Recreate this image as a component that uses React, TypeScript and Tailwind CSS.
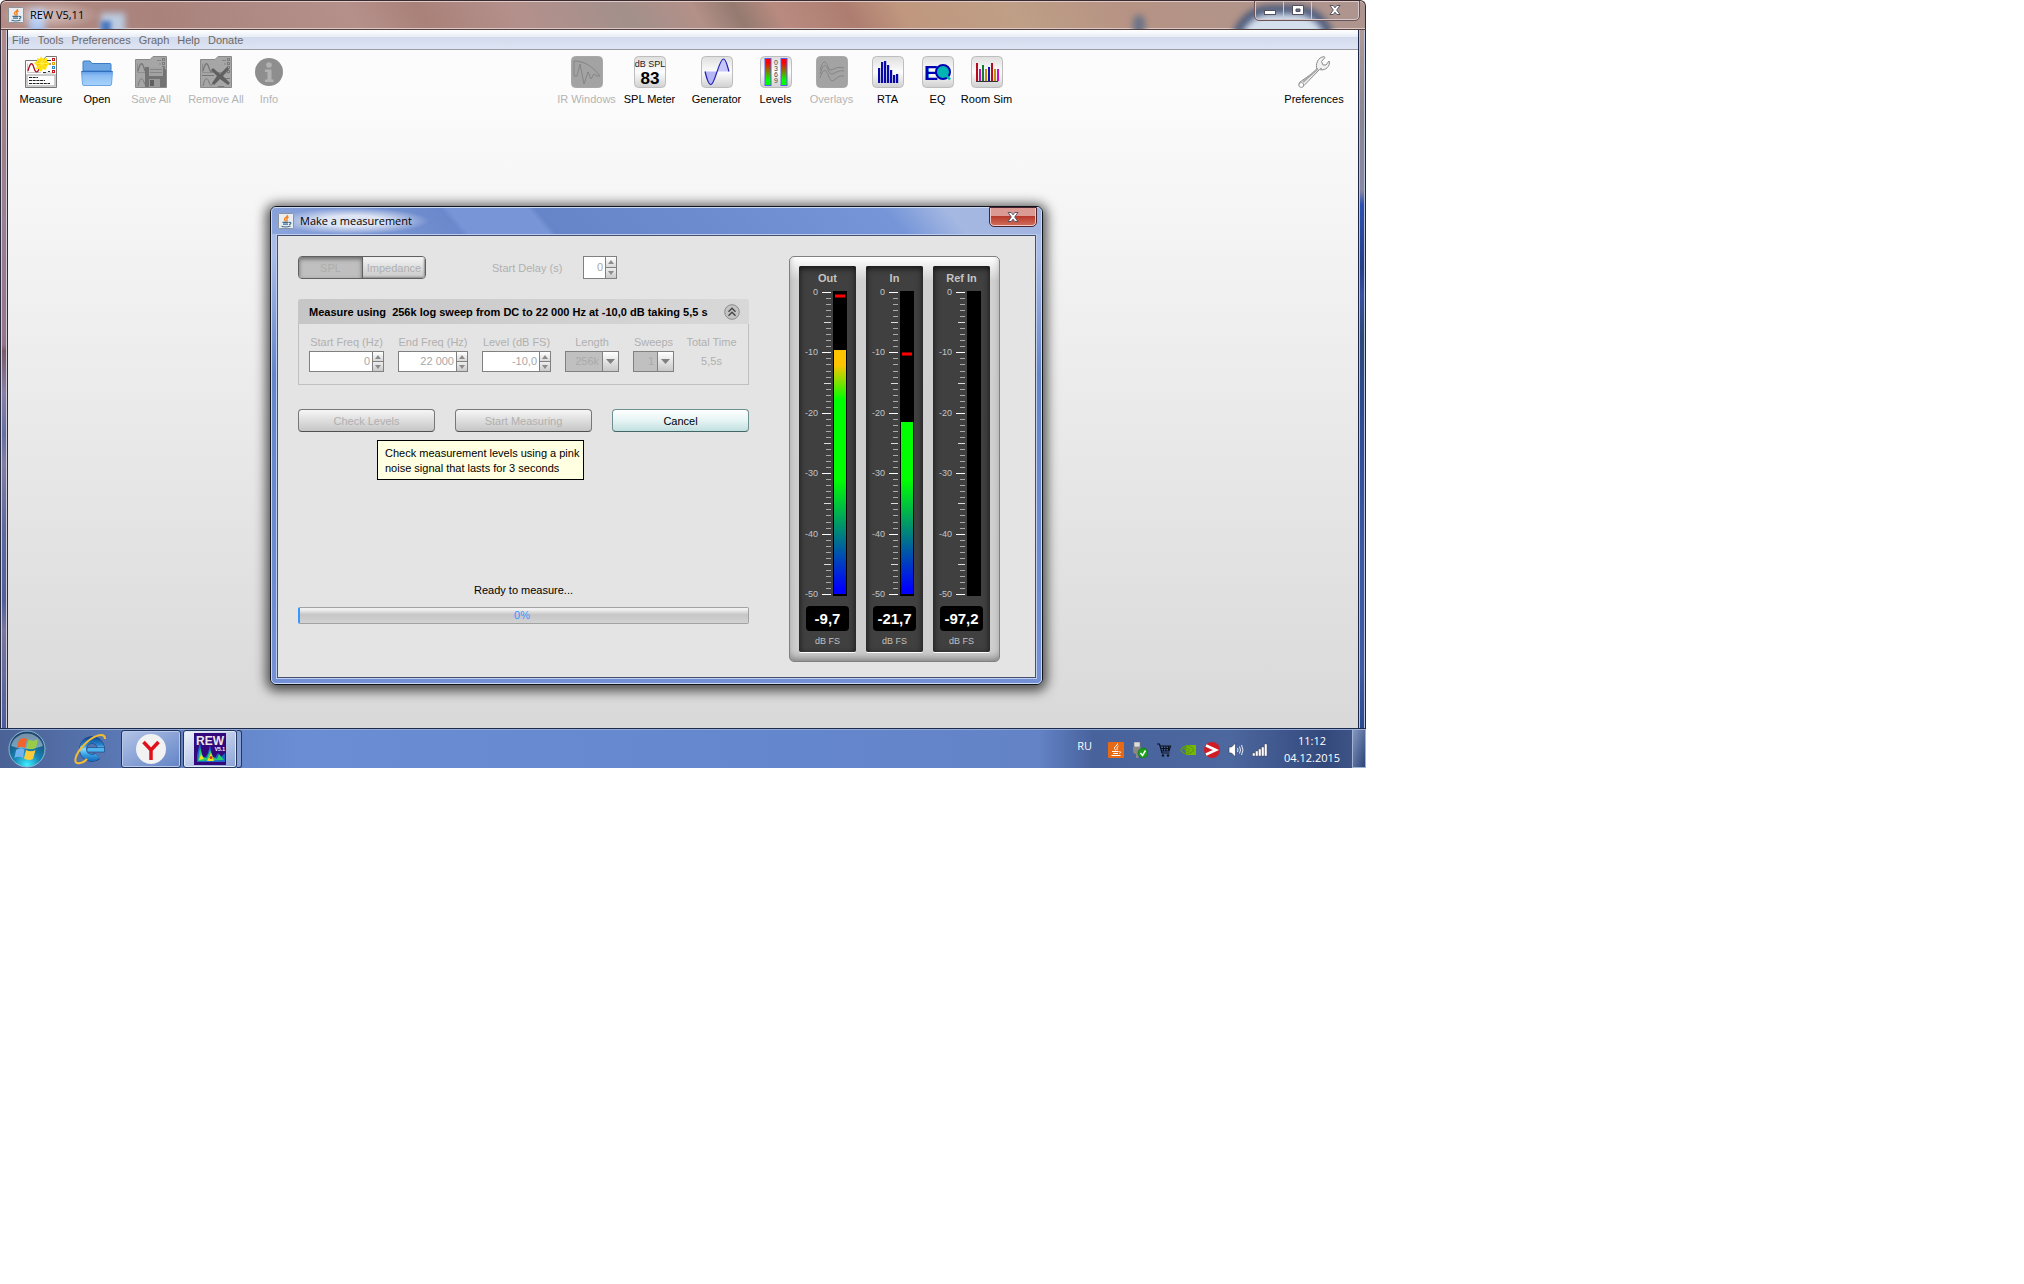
import type { ReactNode } from "react";
import clsx from "clsx";

/* ---------- icons ---------- */

function JavaIcon({ className }: { className?: string }) {
  return (
    <svg viewBox="0 0 16 16" className={clsx("h-4 w-4 shrink-0", className)}>
      <rect x="0.5" y="0.5" width="15" height="15" rx="1" fill="#e9edf1" stroke="#8c949c" />
      <path d="M9.5 2C10 4 6 4.500 6.500 6.500C6.700 7.300 7.500 7.800 7.300 8.500M10.500 4C8.500 5 8.500 5.500 9 6.500C9.400 7.300 8.700 8 8.500 8.500" fill="none" stroke="#ee8022" strokeWidth="1.400" />
      <path d="M4.500 9.300H10.500M5 11.200H10M3.500 13.300C6 14.200 9.500 14.200 12.500 13M11 9.500C13.500 9 13.500 11 11 11.500" fill="none" stroke="#3d6c8c" strokeWidth="1.200" />
    </svg>
  );
}

function Tile({ children, disabled }: { children: ReactNode; disabled?: boolean }) {
  return (
    <svg viewBox="0 0 32 32" className="h-8 w-8">
      <defs>
        <linearGradient id="tile" x1="0" y1="0" x2="0" y2="1">
          <stop offset="0" stopColor="#dedede" />
          <stop offset="0.5" stopColor="#fdfdfd" />
          <stop offset="1" stopColor="#d0d0d0" />
        </linearGradient>
      </defs>
      <rect x="0.500" y="0.500" width="31" height="31" rx="4" fill={disabled ? "#a3a3a3" : "url(#tile)"} stroke={disabled ? "#a8a8a8" : "#bdbdbd"} />
      {children}
    </svg>
  );
}

function Sheet({ disabled }: { disabled?: boolean }) {
  const line = disabled ? "#8a8a8a" : "#777";
  const fill = disabled ? "#a6a6a6" : "#fff";
  const wave = disabled ? "#777" : "#b00c1c";
  return (
    <g>
      {disabled ? (
        <path d="M0.500 3.500H15L18 0.500H31.500V31.500H0.500Z" fill={fill} stroke={line} />
      ) : (
        <path d="M0.500 4.500H18L21 0.500H31.500V31.500H0.500Z" fill={fill} stroke={line} />
      )}
      <path d="M2.500 7.500V16.500H16M18 17H29" fill="none" stroke={disabled ? "#8e8e8e" : "#c5c5c5"} />
      <path d="M3 15C5 7 7 5 9 12C10 16 12 18 14 13" fill="none" stroke={wave} strokeWidth="1.300" />
      <path d="M22 4.500H26M18 16.500H21M23 15.500H25M24 8H26" stroke={disabled ? "#858585" : "#333"} />
      {["#c81818", "#e0a010", "#2888d0", "#c81818"].map((c, i) => (
        <rect key={c + i} x="27.500" y={2.500 + i * 4} width="2" height="2" fill="none" stroke={disabled ? "#7d7d7d" : c} />
      ))}
    </g>
  );
}

function MeasureIcon() {
  return (
    <svg viewBox="0 0 32 32" className="h-8 w-8">
      <Sheet />
      <rect x="2" y="19" width="28" height="11" fill="#fff" stroke="#bbb" strokeWidth="1.500" />
      <path d="M4 21.500H13M4 24.500H20M4 27.500H25" stroke="#222" strokeDasharray="3 0.700" />
      <path d="M16 0L18 3L22 2L22 5L25 8L22 10L21 14L18 13L16 16L14 13L11 13L12 10L9 7L12 5L12 2L15 3Z" fill="#ffe400" />
      <circle cx="17" cy="7.500" r="5" fill="#ffd200" />
      <path d="M17 2V13M11.500 7.500H22.500M13 3.500L21 11.500M21 3.500L13 11.500" stroke="#fff04a" />
    </svg>
  );
}

function FolderIcon() {
  return (
    <svg viewBox="0 0 32 32" className="h-8 w-8">
      <defs>
        <linearGradient id="folder" x1="0" y1="0" x2="0" y2="1">
          <stop offset="0" stopColor="#5f9fea" />
          <stop offset="0.300" stopColor="#8dbdf3" />
          <stop offset="1" stopColor="#a7d3fb" />
        </linearGradient>
      </defs>
      <path d="M2 15V6Q2 5 3 5H9L11 7.500H29Q30 7.500 30 8.500V15Z" fill="#6ea6e4" stroke="#3d7cc6" />
      <path d="M0.500 15.500H31.500L30.500 28Q30.400 29.500 29 29.500H3Q1.600 29.500 1.500 28Z" fill="url(#folder)" stroke="#6ba4e6" />
      <path d="M0.500 15.500H31.500" stroke="#2f6fbd" />
    </svg>
  );
}

function SaveAllIcon() {
  return (
    <svg viewBox="0 0 32 32" className="h-8 w-8">
      <Sheet disabled />
      <path d="M3 30C5 21 7 21 9 26C10 30 12 30 13 27" fill="none" stroke="#777" />
      <path d="M10 11H28L31 14V31H10Z" fill="#737373" />
      <rect x="14" y="11" width="14" height="9" fill="#a2a2a2" />
      <path d="M15 13.500H27M15 16.500H27" stroke="#858585" />
      <rect x="14" y="23" width="11" height="8" fill="#999" />
      <rect x="15" y="24" width="4" height="6" fill="#5f5f5f" />
    </svg>
  );
}

function RemoveAllIcon() {
  return (
    <svg viewBox="0 0 32 32" className="h-8 w-8">
      <Sheet disabled />
      <path d="M3 30C5 21 7 21 9 26C10 30 12 30 13 27M2 19.500H14M25 22.500H30M18 30.500H24" fill="none" stroke="#777" />
      <path d="M13 12L20 18L27 11L29 13L23 20L30 27L28 29L20 23L14 29L12 27L17 20L11 14Z" fill="#606060" />
    </svg>
  );
}

function InfoIcon() {
  return (
    <svg viewBox="0 0 32 32" className="h-8 w-8">
      <circle cx="16" cy="16" r="14" fill="#8e8e8e" />
      <circle cx="16" cy="9" r="2.800" fill="#b2b2b2" />
      <path d="M12 13.500H18.500V23.500H20.500V26H12V23.500H14.500V16H12Z" fill="#b2b2b2" />
    </svg>
  );
}

function WrenchIcon() {
  return (
    <svg viewBox="0 0 32 32" className="h-8 w-8">
      <path
        d="M19 14C17 8 20 1 26 0.700L27 1.500L23.500 5.500L25 9L28 9L31 5L31.500 7C31 12 26 15 21.500 13.500L6 29.500C3 33 -1 29 2 26Z"
        fill="#f0f0f0"
        stroke="#8a8a8a"
      />
      <path d="M5 26L20 12.500M22 13L24 13" stroke="#a9a9a9" strokeWidth="2" />
      <circle cx="3.300" cy="29" r="2.400" fill="#fff" stroke="#999" />
    </svg>
  );
}

const rtaBars = [15, 21, 22, 18, 13, 8, 9];
const roomBars = [
  { h: 18, c: "#b80c1c" },
  { h: 12, c: "#c010c0" },
  { h: 16, c: "#108030" },
  { h: 12, c: "#c09010" },
  { h: 14, c: "#1010c0" },
  { h: 18, c: "#b80c1c" },
  { h: 12, c: "#c09010" },
  { h: 12, c: "#c010c0" },
];

/* ---------- toolbar ---------- */

function Tool({ label, className, disabled, children }: { label: string; className: string; disabled?: boolean; children: ReactNode }) {
  return (
    <button
      type="button"
      disabled={disabled}
      className={clsx("flex flex-col items-center gap-1 whitespace-nowrap leading-[14px]", disabled ? "text-[#b4b4b4]" : "text-black", className)}
    >
      {children}
      {label}
    </button>
  );
}

function Toolbar() {
  return (
    <div className="flex items-start justify-between pt-1.5 pr-2.5 pl-[3px]">
      <div className="flex">
        <Tool label="Measure" className="w-[60px]"><MeasureIcon /></Tool>
        <Tool label="Open" className="w-[52px]"><FolderIcon /></Tool>
        <Tool label="Save All" className="w-[56px]" disabled><SaveAllIcon /></Tool>
        <Tool label="Remove All" className="w-[74px]" disabled><RemoveAllIcon /></Tool>
        <Tool label="Info" className="w-[32px]" disabled><InfoIcon /></Tool>
      </div>
      <div className="flex pr-0.5">
        <Tool label="IR Windows" className="w-[64px]" disabled>
          <Tile disabled>
            <path d="M3 20V5C14 5 22 11 29 20M3 20H6L9 8L13 28L17 16L20 23L23 18L26 20H29" fill="none" stroke="#858585" />
          </Tile>
        </Tool>
        <Tool label="SPL Meter" className="w-[62px]">
          <Tile>
            <text x="16" y="11" textAnchor="middle" fontSize="9" fill="#222">dB SPL</text>
            <text x="16" y="28" textAnchor="middle" fontSize="17" fontWeight="bold" fill="#000">83</text>
          </Tile>
        </Tool>
        <Tool label="Generator" className="w-[72px]">
          <Tile>
            <path d="M4 15.500C6 24 8 29 10 28.500C13 28 15 20 16.500 15.500Z" fill="#b6b6f6" />
            <path d="M16.500 15.500C18 10 20 3 22.500 3C25 3 26 9 28 15.500Z" fill="#c6c6fa" />
            <path d="M4 15.500C6 24 8 29 10 28.500C14 28 18 3 22.500 3C25 3 26 9 28 15.500" fill="none" stroke="#2020b0" strokeWidth="1.200" />
          </Tile>
        </Tool>
        <Tool label="Levels" className="w-[46px]">
          <Tile>
            <defs>
              <linearGradient id="lvl" x1="0" y1="0" x2="0" y2="1">
                <stop offset="0.150" stopColor="#f00" />
                <stop offset="0.800" stopColor="#0f0" />
              </linearGradient>
            </defs>
            <rect x="5" y="2.500" width="6" height="27" fill="url(#lvl)" stroke="#5a5ae8" />
            <rect x="21" y="2.500" width="6" height="27" fill="url(#lvl)" stroke="#5a5ae8" />
            {["0", "3", "6", "9"].map((n, i) => (
              <text key={n} x="16" y={9 + i * 6} textAnchor="middle" fontSize="7" fill="#444">{n}</text>
            ))}
          </Tile>
        </Tool>
        <Tool label="Overlays" className="w-[66px]" disabled>
          <Tile disabled>
            <path d="M4 14C8 1 10 6 13 13C15 17 19 9 28 12M4 18C8 5 10 9 13 16C16 22 20 13 28 15M4 22C8 10 10 14 13 21C17 31 20 18 28 20" fill="none" stroke="#858585" />
          </Tile>
        </Tool>
        <Tool label="RTA" className="w-[46px]">
          <Tile>
            {rtaBars.map((h, i) => (
              <rect key={i} x={6 + i * 3} y={27 - h} width="2.200" height={h} fill="#0808a8" />
            ))}
          </Tile>
        </Tool>
        <Tool label="EQ" className="w-[54px]">
          <Tile>
            <text x="2" y="23.500" fontSize="21" fontWeight="bold" fill="#0000b0">E</text>
            <circle cx="21" cy="16" r="7" fill="#00b4b4" stroke="#0000b0" strokeWidth="2" />
            <path d="M24 19L28 23.500" stroke="#00b4b4" strokeWidth="2.500" />
          </Tile>
        </Tool>
        <Tool label="Room Sim" className="w-[44px]">
          <Tile>
            {roomBars.map((b, i) => (
              <rect key={i} x={5 + i * 3} y={25 - b.h} width="2" height={b.h} fill={b.c} />
            ))}
            <path d="M5 25.500H27" stroke="#333" />
          </Tile>
        </Tool>
      </div>
      <Tool label="Preferences" className="w-[68px]"><WrenchIcon /></Tool>
    </div>
  );
}

/* ---------- dialog form ---------- */

function Spinner({ id, value, className }: { id: string; value: string; className: string }) {
  return (
    <div className={clsx("flex border border-[#808080] bg-white", className)}>
      <input id={id} disabled value={value} readOnly className="w-0 min-w-0 flex-1 bg-white pr-0.5 text-right text-[#a8a8a8]" />
      <div className="flex w-[11px] flex-col border-l border-[#808080]">
        <button type="button" disabled aria-label="Increase" className="flex flex-1 items-center justify-center border-b border-[#808080] bg-linear-to-b from-white to-[#d8d8d8]">
          <svg viewBox="0 0 6 4" className="h-1 w-1.5"><path d="M0 4L3 0L6 4Z" fill="#8c8c8c" /></svg>
        </button>
        <button type="button" disabled aria-label="Decrease" className="flex flex-1 items-center justify-center bg-linear-to-b from-[#eee] to-[#cacaca]">
          <svg viewBox="0 0 6 4" className="h-1 w-1.5"><path d="M0 0L3 4L6 0Z" fill="#8c8c8c" /></svg>
        </button>
      </div>
    </div>
  );
}

function Combo({ id, value }: { id: string; value: string }) {
  return (
    <div className="flex h-[21px] border border-[#808080]">
      <select id={id} disabled className="w-0 min-w-0 flex-1 appearance-none bg-[#c0c0c0] pr-[3px] text-right text-[#aaa] opacity-100 [text-align-last:right]">
        <option>{value}</option>
      </select>
      <span className="flex w-4 items-center justify-center border-l border-[#808080] bg-linear-to-b from-white to-[#c8c8c8]">
        <svg viewBox="0 0 9 5" className="h-[5px] w-[9px]"><path d="M0 0H9L4.500 5Z" fill="#808080" /></svg>
      </span>
    </div>
  );
}

function Field({ id, label, className, children }: { id: string; label: string; className: string; children: ReactNode }) {
  return (
    <div className={clsx("flex flex-col gap-0.5", className)}>
      <label htmlFor={id} className="self-center whitespace-nowrap leading-[14px]">{label}</label>
      {children}
    </div>
  );
}

const greyButton =
  "h-[23px] w-full rounded-[4px] border border-[#777] border-b-[#505050] bg-linear-to-b from-[#f6f6f6] via-[#dedede] to-[#c6c6c6] pt-px text-[#b0b0b0]";

function MeasureForm() {
  return (
    <form className="flex w-[451px] flex-col">
      <div className="flex items-center text-[#b0b0b0]">
        <div className="flex h-[23px] w-32 overflow-hidden rounded-[4px] border border-[#606060]">
          <button type="button" disabled className="w-16 border-r border-[#606060] bg-[#bfbfbf] pt-px text-[#adadad] shadow-[inset_0_2px_4px_#666]">SPL</button>
          <button type="button" disabled className="flex-1 bg-linear-to-b from-[#f4f4f4] to-[#c9c9c9] pt-px shadow-[inset_-1px_-1px_2px_#888]">Impedance</button>
        </div>
        <label htmlFor="delay" className="ml-[66px] pt-px whitespace-nowrap">Start Delay (s)</label>
        <Spinner id="delay" value="0" className="ml-auto h-[23px] w-[34px]" />
        <span className="w-[132px]" />
      </div>

      <section className="mt-5">
        <header className="flex h-[25px] items-center justify-between rounded-t-[3px] bg-linear-to-r from-[#c6c6c6] to-[#d8d8d8] pr-[9px] pl-[11px]">
          <h2 className="pt-px text-[11px] font-bold whitespace-pre text-black">
            {"Measure using  256k log sweep from DC to 22 000 Hz at -10,0 dB taking 5,5 s"}
          </h2>
          <button type="button" aria-label="Collapse" className="shrink-0">
            <svg viewBox="0 0 16 16" className="h-4 w-4">
              <circle cx="8" cy="8" r="7.300" fill="#c4c4c4" stroke="#8a8a8a" />
              <path d="M4.500 7.700L8 4.200L11.500 7.700M4.500 11.700L8 8.200L11.500 11.700" fill="none" stroke="#444" strokeWidth="1.400" />
            </svg>
          </button>
        </header>
        <div className="flex gap-3.5 border border-t-0 border-[#c0c0c0] pt-[11px] pb-3 pl-2.5 text-[#b0b0b0]">
          <Field id="start" label="Start Freq (Hz)" className="w-[75px]">
            <Spinner id="start" value="0" className="h-[21px]" />
          </Field>
          <Field id="end" label="End Freq (Hz)" className="w-[70px]">
            <Spinner id="end" value="22 000" className="h-[21px]" />
          </Field>
          <Field id="level" label="Level (dB FS)" className="w-[69px]">
            <Spinner id="level" value="-10,0" className="h-[21px]" />
          </Field>
          <Field id="length" label="Length" className="w-[54px]">
            <Combo id="length" value="256k" />
          </Field>
          <Field id="sweeps" label="Sweeps" className="w-[41px]">
            <Combo id="sweeps" value="1" />
          </Field>
          <Field id="total" label="Total Time" className="w-[47px]">
            <output id="total" className="text-center leading-[21px]">5,5s</output>
          </Field>
        </div>
      </section>

      <div className="mt-6 grid grid-cols-3 gap-5">
        <div className="relative">
          <button type="button" disabled className={greyButton}>Check Levels</button>
          <div role="tooltip" className="absolute top-[31px] left-[79px] z-10 border border-black bg-[#ffffe1] pt-[5px] pr-1 pb-[3px] pl-[7px] leading-[15px] whitespace-nowrap text-black">
            Check measurement levels using a pink
            <br />
            noise signal that lasts for 3 seconds
          </div>
        </div>
        <button type="button" disabled className={greyButton}>Start Measuring</button>
        <button type="button" className="h-[23px] rounded-[4px] border border-[#6f9090] border-b-[#466] bg-linear-to-b from-white via-[#e6f4f4] to-[#c2dfe0] pt-px text-black">
          Cancel
        </button>
      </div>

      <p className="mt-auto text-center leading-[14px] text-black">Ready to measure...</p>
      <div
        role="progressbar"
        aria-valuenow={0}
        className="mt-2.5 mb-[38px] flex h-[17px] items-center justify-center rounded-[2px] border border-l-2 border-[#a2a2a2] border-l-[#3399ff] bg-linear-to-b from-[#f0f0f0] from-10% via-[#c6c6c6] via-45% to-[#d2d2d2] pr-1 text-[#3399ff]"
      >
        0%
      </div>
    </form>
  );
}

/* ---------- level meters ---------- */

const meters = [
  { name: "Out", value: "-9,7", level: 9.7, peak: 0.8 },
  { name: "In", value: "-21,7", level: 21.7, peak: 10.4 },
  { name: "Ref In", value: "-97,2", level: 97.2, peak: null },
];

const dbToY = (db: number) => Math.round(6 + db * 6.04);

function Meter({ name, value, level, peak }: (typeof meters)[number]) {
  return (
    <div className="flex w-[57px] flex-col items-center rounded-[2px] bg-[#404040] pt-1 pb-[5px] shadow-[inset_0_2px_6px_#111,0_1px_0_#fff]">
      <h3 className="leading-4 font-bold text-[#c4c4c4]">{name}</h3>
      <svg viewBox="0 0 57 314" className="h-[314px] w-[57px]">
        <defs>
          <linearGradient id="meter" gradientUnits="userSpaceOnUse" x1="0" y1="79" x2="0" y2="308">
            <stop offset="0" stopColor="#ffc400" />
            <stop offset="0.150" stopColor="#00ff00" />
            <stop offset="0.500" stopColor="#00ff00" />
            <stop offset="0.980" stopColor="#0000ff" />
          </linearGradient>
        </defs>
        {Array.from({ length: 51 }, (_, db) => {
          const major = db % 10 === 0;
          const x = major ? 23 : db % 5 === 0 ? 25 : 27;
          return <rect key={db} x={x} y={dbToY(db)} width={32 - x} height="1" fill={major ? "#fff" : db % 5 === 0 ? "#ddd" : "#aaa"} />;
        })}
        {[0, 10, 20, 30, 40, 50].map((db) => (
          <text key={db} x="19" y={dbToY(db) + 3} textAnchor="end" fontSize="9" fill="#c4c4c4">
            {db === 0 ? "0" : `-${db}`}
          </text>
        ))}
        <rect x="34" y="5" width="14" height="305" fill="#000" />
        {level < 50 && <rect x="35" y={dbToY(level) - 1} width="12" height={309 - dbToY(level)} fill="url(#meter)" />}
        {peak !== null && (
          <g>
            <rect x="36" y={dbToY(peak) - 3} width="10" height="4" fill="#800" />
            <rect x="36" y={dbToY(peak) - 2} width="10" height="2" fill="#f00" />
          </g>
        )}
      </svg>
      <output className="mt-1.5 h-[25px] w-[43px] rounded-[4px] bg-black text-center text-[15px] leading-[25px] font-bold text-white">{value}</output>
      <span className="mt-1 text-[9px] leading-3 text-[#c0c0c0]">dB FS</span>
    </div>
  );
}

function Dialog() {
  return (
    <div className="w-fit rounded-[6px] border border-[#101418] bg-linear-to-b from-[#a9bce6] from-10% via-[#6485c8] via-35% to-[#7391d4] shadow-[0_2px_12px_4px_rgba(0,0,0,0.65)]">
      <div className="rounded-[5px] border border-[#c9d8f4] px-1 pb-1">
        <div className="-mx-1 flex h-[26px] justify-between rounded-t-[4px] bg-[linear-gradient(50deg,#8ba4dc_0%,#6a88cb_24%,#7896d7_25%,#7896d7_35%,#6685c8_36%,#6d8dd0_60%,#7595d8_80%,#a5b8e2_88%,#a0b4e0_100%)] pr-[5px] pl-1.5">
          <div className="flex items-center gap-1.5 bg-[radial-gradient(ellipse,rgba(255,255,255,0.75)_30%,transparent_72%)] pr-4">
            <JavaIcon />
            <h1 className="font-['Open_Sans'] text-[11px] text-black">Make a measurement</h1>
          </div>
          <button
            type="button"
            aria-label="Close dialog"
            className="flex h-[18px] w-[46px] items-center justify-center rounded-b-[4px] border border-t-0 border-[#f0c8c8] bg-linear-to-b from-[#dc9a94] from-45% via-[#b83a2c] via-50% to-[#cf6a58] outline outline-[#4a2430]"
          >
            <CloseGlyph />
          </button>
        </div>
        <div className="border border-[#bccdf0]">
          <div className="flex gap-10 border border-[#44506e] bg-[#e4e4e4] pt-5 pr-[35px] pb-[15px] pl-5">
            <MeasureForm />
            <div className="flex gap-2.5 rounded-[5px] border border-[#808080] bg-linear-to-b from-white via-[#d0d0d0] via-6% to-[#cecece] p-[9px] shadow-[inset_0_-5px_8px_-3px_#777]">
              {meters.map((m) => (
                <Meter key={m.name} {...m} />
              ))}
            </div>
          </div>
        </div>
      </div>
    </div>
  );
}

/* ---------- window frame ---------- */

function CloseGlyph() {
  return (
    <svg viewBox="0 0 12 10" className="h-2.5 w-3">
      <path d="M1 0.500H4.200L6 2.800L7.800 0.500H11L7.700 5L11 9.500H7.800L6 7.200L4.200 9.500H1L4.300 5Z" fill="#fff" stroke="#4a4a5c" strokeWidth="0.900" />
    </svg>
  );
}

function TitleBar() {
  return (
    <div className="relative flex h-[30px] justify-between overflow-hidden rounded-t-[6px] border border-b-[#54403e] border-[#3c2a2e] bg-[linear-gradient(60deg,#b38d86_0%,#a9827c_12%,#b5908a_26%,#a98179_31%,#b4908c_38%,#a3908b_46%,#b39088_51%,#947a70_54%,#b98b80_57%,#ad7d70_62%,#c0977f_66%,#bf9f86_74%,#b69384_82%,#ad958f_100%)] shadow-[inset_0_1px_0_#dccbc8,inset_0_-1px_0_#dccbc8]">
      <span className="absolute top-2 left-7 h-7 w-4 bg-[#a9c2ee] blur-[3px]" />
      <span className="absolute top-3 left-[100px] h-6 w-6 bg-[#bccbe0] blur-[3px]" />
      <span className="absolute top-5 left-[100px] h-3 w-2.5 bg-[#4a78c0] blur-[2px]" />
      <span className="absolute top-3.5 left-[1132px] h-5 w-3 rounded-full bg-[#6b7388] blur-[3px]" />
      <span className="absolute top-1 left-[1230px] h-20 w-[104px] rounded-full border-[9px] border-[#4e5c7c] bg-[#d5e0ee] blur-[3px]" />
      <div className="relative flex items-center gap-1.5 bg-[radial-gradient(ellipse,rgba(255,255,255,0.35)_20%,transparent_72%)] pr-4 pl-[7px]">
        <JavaIcon />
        <span className="font-['Open_Sans'] text-[11px] text-black">REW V5,11</span>
      </div>
      <div className="relative mr-1.5 flex h-[19px] rounded-b-[4px] border border-t-0 border-[#d6c8ca] outline outline-[#6b5558]">
        <button type="button" aria-label="Minimize" className="flex w-7 items-center justify-center border-r border-[#d6c8ca]">
          <svg viewBox="0 0 12 10" className="h-2.5 w-3"><rect x="0.500" y="5.500" width="11" height="4" fill="#fff" stroke="#55505e" /></svg>
        </button>
        <button type="button" aria-label="Maximize" className="flex w-7 items-center justify-center border-r border-[#d6c8ca]">
          <svg viewBox="0 0 12 10" className="h-2.5 w-3"><path d="M0.500 0.500H11.500V9.500H0.500ZM4 4V6.500H8V4Z" fill="#fff" fillRule="evenodd" stroke="#55505e" /></svg>
        </button>
        <button type="button" aria-label="Close" className="flex w-[46px] items-center justify-center">
          <CloseGlyph />
        </button>
      </div>
    </div>
  );
}

const menus = ["File", "Tools", "Preferences", "Graph", "Help", "Donate"];

function MainWindow() {
  return (
    <div>
      <TitleBar />
      <div className="flex">
        <div className="w-2 shrink-0 border-x border-[#2c2c40] bg-[linear-gradient(#b08a88,#a08088_15%,#997f90_28%,#967588_45%,#7a5c64_46%,#8a80a8_52%,#6470a4_58%,#8080a4_62%,#5c68a0_72%,#50609c_82%,#7878a0_86%,#4c5c9c)] shadow-[inset_-1px_0_0_#d0cbd8,inset_1px_0_0_#d0cbd8]" />
        <div className="min-w-0 flex-1 bg-linear-to-b from-[#fcfcfc] from-8% to-[#d9d9d9]">
          <nav className="flex h-5 items-center gap-2 border-b border-[#9c9ca4] bg-[linear-gradient(#ffffff,#e8eef6_35%,#d3daec_36%,#dde4f4)] pt-0.5 pl-1 text-[#6b6b6b]">
            {menus.map((m) => (
              <a key={m} href="#">{m}</a>
            ))}
          </nav>
          <Toolbar />
          <main className="pt-[100px] pb-[43px] pl-[262px]">
            <Dialog />
          </main>
        </div>
        <div className="w-2 shrink-0 border-x border-[#1e2648] bg-[linear-gradient(#b09a98,#8a8690_12%,#8888a4_23%,#2c50b0_25%,#243f88_34%,#3850a0_38%,#2c4878_44%,#2c4c94_56%,#3c58a4_75%,#3e5aa4_92%,#284a90)] shadow-[inset_-1px_0_0_#b8c4dc,inset_1px_0_0_#b8c4dc]" />
      </div>
    </div>
  );
}

/* ---------- taskbar ---------- */

function StartOrb() {
  return (
    <svg viewBox="0 0 38 38" className="h-[38px] w-[38px]">
      <defs>
        <radialGradient id="orb" cx="0.500" cy="0.950" r="0.850">
          <stop offset="0" stopColor="#3ff0ff" />
          <stop offset="0.450" stopColor="#1683b4" />
          <stop offset="1" stopColor="#1c4870" />
        </radialGradient>
      </defs>
      <circle cx="19" cy="19" r="18" fill="url(#orb)" stroke="#8fb8d0" />
      <path d="M3 16A16.500 16.500 0 0 1 35 16Q19 22 3 16Z" fill="#fff" opacity="0.400" />
      <path d="M11 10Q15 6.500 19 9L17 18Q12 15.500 8.500 18.500Z" fill="#f0642c" />
      <path d="M20.500 9.500Q25 12 30 9L28 18Q23 20.500 18.500 18Z" fill="#9acb46" />
      <path d="M8 20Q12 17 16.500 19.500L15 28Q10.500 25.500 6.500 28Z" fill="#6fb4ee" />
      <path d="M18 20Q23 22.500 27.500 20L25 29Q20 31 16 28.500Z" fill="#fccb3a" />
    </svg>
  );
}

function ExplorerIcon() {
  return (
    <svg viewBox="0 0 32 32" className="h-8 w-8">
      <defs>
        <linearGradient id="ie" gradientUnits="userSpaceOnUse" x1="0" y1="3" x2="0" y2="29">
          <stop offset="0" stopColor="#0c3f8c" />
          <stop offset="0.350" stopColor="#2a86d0" />
          <stop offset="0.500" stopColor="#8cd8fa" />
          <stop offset="0.700" stopColor="#3aa4e6" />
          <stop offset="1" stopColor="#0f5fb4" />
        </linearGradient>
      </defs>
      <circle cx="18" cy="16" r="9" fill="none" stroke="#123f80" strokeWidth="7.500" strokeDasharray="49 8" strokeDashoffset="-8" />
      <circle cx="18" cy="16" r="9" fill="none" stroke="url(#ie)" strokeWidth="6.500" strokeDasharray="49 8" strokeDashoffset="-8" />
      <path d="M13 14.500H30.500V19H13Z" fill="#4fb4ee" stroke="#123f80" strokeWidth="0.600" />
      <path d="M31 6C31 -2 18 3 10 12C1 21 -2 32 6 30C8 30 11 28 13 26" fill="none" stroke="#f3bd33" strokeWidth="2" />
    </svg>
  );
}

function RewIcon() {
  return (
    <svg viewBox="0 0 32 32" className="h-8 w-8">
      <rect width="32" height="32" fill="#33087c" />
      <path d="M3 29V22L6 9L8 22L11 25L14 20L16 12L18 22L21 25L24 20L27 24L31 20V29Z" fill="#1c64c8" />
      <path d="M4 28L6 15L9 24L13 25L16 17L19 24L23 26L25 21L30 27Z" fill="#22d070" />
      <path d="M5 27L7 21L10 26ZM13 28L17 20L20 28Z" fill="#f0e020" />
      <circle cx="17" cy="24.500" r="1.500" fill="#e83018" />
      <text x="16" y="11.500" textAnchor="middle" fontSize="12" fontWeight="bold" fill="#e8e8e8">REW</text>
      <text x="31" y="18" textAnchor="end" fontSize="5" fontWeight="bold" fill="#fff">V5.1</text>
    </svg>
  );
}

function TrayIcons() {
  return (
    <div className="flex items-center gap-2 pt-0.5">
      <svg viewBox="0 0 16 16" className="h-4 w-4">
        <rect width="16" height="16" rx="1" fill="#e66a16" />
        <path d="M9.500 1.500C10 4 6 4 6.500 6.500C7 7.500 7.500 7.500 7.500 8.500M10.500 4C8.500 5 9.500 6.500 9 8M4 9.500H10.500M5 11.500H10M3.500 13.500H12.500M11.500 9.500C13 9.500 13 11 11 11.500" fill="none" stroke="#fff" />
      </svg>
      <svg viewBox="0 0 16 16" className="h-4 w-4">
        <path d="M2 0H8V5H2Z" fill="#ddd" stroke="#777" strokeWidth="0.600" />
        <path d="M1 5H9V9Q9 12 6.500 12V16H4V12Q1 12 1 9Z" fill="#888" />
        <circle cx="11" cy="11" r="5" fill="#1ea01e" stroke="#0d700d" strokeWidth="0.600" />
        <path d="M8.500 11L10.500 13.500L13.500 8.500" fill="none" stroke="#fff" strokeWidth="1.500" />
      </svg>
      <svg viewBox="0 0 16 16" className="h-4 w-4">
        <path d="M1 2H3.500L6 11H13.500M4 4H14.500L13 9H5.500M7.500 4V9M10 4V9M12.500 4V9M5 6.500H13.500" fill="none" stroke="#0c1220" strokeWidth="1.200" />
        <circle cx="7" cy="13.500" r="1.200" fill="#0c1220" />
        <circle cx="12" cy="13.500" r="1.200" fill="#0c1220" />
      </svg>
      <svg viewBox="0 0 16 16" className="h-4 w-4">
        <path d="M6 3H16V13H6Z" fill="#76b900" />
        <path d="M0.500 8Q4 3 9.500 4Q12 5 14 8Q9.500 13 4.500 11.500Q2 10 0.500 8ZM3.500 8Q6.500 4.500 9.500 7.500Q8 10.500 6 9.500Q5 8.500 6.500 7.500" fill="none" stroke="#5f9e10" strokeWidth="1.200" />
      </svg>
      <svg viewBox="0 0 16 16" className="h-4 w-4">
        <circle cx="8" cy="8" r="8" fill="#d01c24" />
        <path d="M2 3.500L12 8L2 12.500" fill="none" stroke="#fff" strokeWidth="2.500" />
      </svg>
      <svg viewBox="0 0 16 16" className="h-4 w-4">
        <path d="M1 5H3.500L7.500 1V15L3.500 11H1Z" fill="#fff" stroke="#334" strokeWidth="0.600" />
        <path d="M9.500 6Q10.500 8 9.500 10M11.500 4.500Q13.500 8 11.500 11.500M13.500 3Q16.500 8 13.500 13" fill="none" stroke="#e6ecf8" />
      </svg>
      <svg viewBox="0 0 16 16" className="h-4 w-4">
        {[3, 5, 7, 9, 12].map((h, i) => (
          <rect key={h} x={0.5 + i * 3} y={14 - h} width="2.500" height={h} fill="#fff" stroke="#445" strokeWidth="0.400" />
        ))}
      </svg>
    </div>
  );
}

function Taskbar() {
  return (
    <footer className="flex h-10 items-center justify-between border-t border-[#1c2a4c] bg-[linear-gradient(90deg,#4a6295_0%,#6080c0_12%,#6a8dd4_22%,#6486cc_60%,#6383c6_76%,#48629c_80%,#4d689f_90%,#33497c_97%,#44598a_100%)] shadow-[inset_0_1px_0_#93a9d6]">
      <div className="flex h-full items-center">
        <button type="button" aria-label="Start" className="ml-2"><StartOrb /></button>
        <button type="button" aria-label="Internet Explorer" className="ml-7"><ExplorerIcon /></button>
        <button type="button" aria-label="Yandex" className="ml-[15px] flex h-[38px] w-[60px] items-center justify-center rounded-[3px] border border-[#24365e] bg-linear-to-br from-[#b4c4e6] to-[#6283c6] shadow-[inset_0_0_0_1px_#b9c8e8]">
          <svg viewBox="0 0 30 30" className="h-[30px] w-[30px]">
            <circle cx="15" cy="15" r="15" fill="#f2f2f2" />
            <path d="M7.500 8L15 16V26M22.500 8L15 16" fill="none" stroke="#e0101c" strokeWidth="3.500" />
          </svg>
        </button>
        <button type="button" aria-label="REW" className="ml-0.5 flex h-[38px] w-[54px] items-center justify-center rounded-[3px] border border-[#24365e] bg-linear-to-br from-[#f0f4fb] to-[#8ba3d6] shadow-[inset_0_0_0_1px_#dfe7f6]">
          <RewIcon />
        </button>
        <span className="h-[38px] w-[5px] rounded-r-[3px] border border-l-0 border-[#24365e] bg-[#88a0d4]" />
      </div>
      <div className="flex h-full items-center font-['Open_Sans'] text-[11px] text-white">
        <span className="mr-4 pb-1">RU</span>
        <TrayIcons />
        <div className="w-[84px] pl-1 text-center leading-[17px]">
          11:12
          <br />
          04.12.2015
        </div>
        <button type="button" aria-label="Show desktop" className="h-full w-3.5 border border-[#a2b2d2] bg-linear-to-br from-[#8598c0] to-[#2e4478]" />
      </div>
    </footer>
  );
}

export default function App() {
  return (
    <div className="min-h-screen bg-white">
      <div className="w-full max-w-[1366px] font-['Liberation_Sans',sans-serif] text-[11px]">
        <MainWindow />
        <Taskbar />
      </div>
    </div>
  );
}
